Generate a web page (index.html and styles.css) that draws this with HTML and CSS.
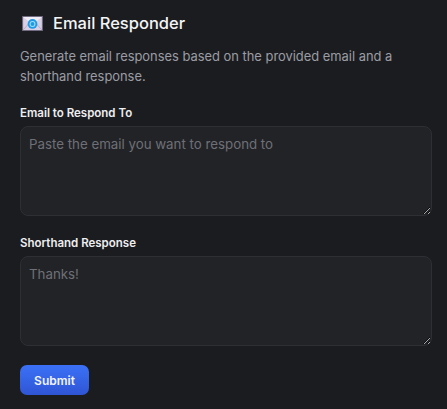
FILE: index.html
```html
<!DOCTYPE html>
<html lang="en">
<head>
<meta charset="utf-8">
<title>Email Responder</title>
<link rel="stylesheet" href="styles.css">
</head>
<body>
<main class="page">
  <header class="title-row">
    <svg class="mail-icon" viewBox="0 0 22 16" width="21" height="15" aria-hidden="true">
      <rect x="0.5" y="0.5" width="21" height="15" fill="#d9d0e6" stroke="#6f6a80"/>
      <path d="M1 1 L11 9 L21 1 Z" fill="#f0ecf6"/>
      <path d="M1 15 L8 7 M21 15 L14 7" stroke="#b5abc6" stroke-width="1" fill="none"/>
      <circle cx="11" cy="8.5" r="5.2" fill="#1f9be6"/>
      <circle cx="11" cy="8.5" r="2.6" fill="none" stroke="#9fdcfb" stroke-width="1.1"/>
    </svg>
    <h1 class="title">Email Responder</h1>
  </header>
  <p class="desc">Generate email responses based on the provided email and a shorthand response.</p>
  <form class="form">
    <label class="field">
      <span class="label">Email to Respond To</span>
      <textarea class="input" placeholder="Paste the email you want to respond to"></textarea>
    </label>
    <label class="field">
      <span class="label">Shorthand Response</span>
      <textarea class="input" placeholder="Thanks!"></textarea>
    </label>
    <button class="submit" type="button">Submit</button>
  </form>
</main>
</body>
</html>
```
FILE: styles.css
```css
* { box-sizing: border-box; }
html, body { margin: 0; height: 100%; }
body {
  background: #1b1c20;
  font-family: Inter, "Liberation Sans", sans-serif;
  color: #f4f4f5;
  overflow: hidden;
}
.page { padding: 12px 15px 0 20px; }
.title-row { display: flex; align-items: center; gap: 10px; padding-left: 2px; height: 22px; }
.mail-icon { flex: none; }
.title { margin: 0; font-size: 16.5px; font-weight: 500; line-height: 22px; color: #f4f4f5; }
.desc { margin: 13px 0 0; font-size: 12.9px; line-height: 20px; color: #9b9ca3; }
.form { display: flex; flex-direction: column; margin-top: 18px; }
.field { display: flex; flex-direction: column; margin-bottom: 19px; }
.label { font-size: 11.5px; font-weight: 600; line-height: 16px; color: #eeeef0; margin-bottom: 5px; }
.input {
  display: block;
  width: 100%;
  height: 90px;
  padding: 7px 8px;
  background: #222327;
  border: 1px solid #2e2f34;
  border-radius: 8px;
  font-family: inherit;
  font-size: 13.3px;
  line-height: 20px;
  color: #eeeef0;
  outline: none;
}
.input::placeholder { color: #6f7076; opacity: 1; }
.submit {
  align-self: flex-start;
  width: 69px;
  height: 30px;
  border: 0;
  border-radius: 7px;
  background: linear-gradient(#3b71f7, #2f55d4);
  color: #f2f4ff;
  font-family: inherit;
  font-size: 12px;
  font-weight: 600;
  padding: 0;
}
```
